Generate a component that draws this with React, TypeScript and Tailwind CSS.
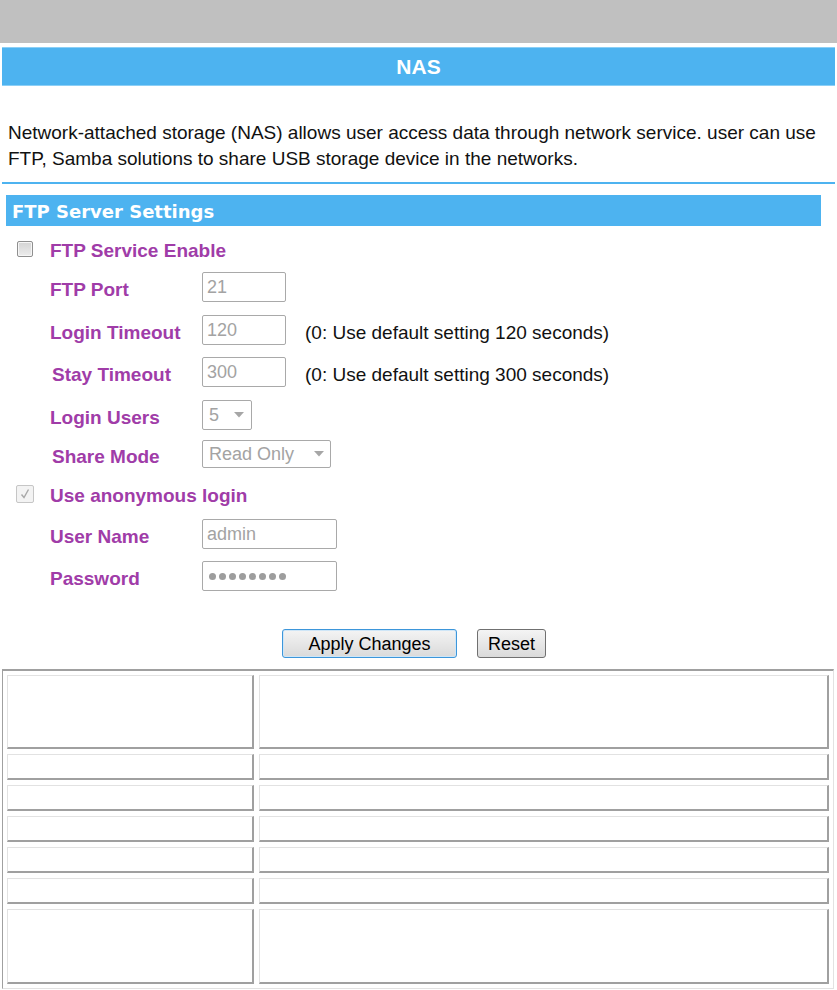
import React from "react";

const labelCls =
  "font-bold text-[19px] leading-none text-[#a03ca8] whitespace-nowrap pt-[4px]";

function TextBox({ value, w }: { value: string; w: string }) {
  return (
    <div
      className={`${w} h-[30px] border border-[#a9a9a9] rounded-[2px] bg-white flex items-center pl-[4px] text-[18px] text-[#a3a3a3]`}
    >
      {value}
    </div>
  );
}

function Arrow() {
  return (
    <svg width="10" height="6" viewBox="0 0 10 6" className="shrink-0">
      <path d="M0 0 L10 0 L5 5.5 Z" fill="#a6a6a6" />
    </svg>
  );
}

function Row({
  mt,
  label,
  shift,
  children,
}: {
  mt: string;
  label: string;
  shift?: boolean;
  children: React.ReactNode;
}) {
  return (
    <div className={`flex items-center h-[30px] pl-[50px] ${mt}`}>
      <div className={`w-[152px] flex ${shift ? "pl-[2px]" : ""}`}>
        <span className={labelCls}>{label}</span>
      </div>
      {children}
    </div>
  );
}

function Cell({ h }: { h: string }) {
  return (
    <div
      className={`${h} bg-white border-t border-l border-b-2 border-r-2 border-t-[#e2e2e2] border-l-[#e2e2e2] border-b-[#a0a0a0] border-r-[#a0a0a0]`}
    />
  );
}

const noteCls =
  "ml-[19px] pt-[4px] text-[19px] leading-none text-[#111] whitespace-nowrap";

export default function App() {
  return (
    <div className="w-[837px] h-[990px] overflow-hidden bg-white font-['Liberation_Sans',Arial,sans-serif] text-black">
      <div className="h-[43px] bg-[#c0c0c0]" />
      <div className="mt-[4px] mx-[2px] h-[39px] bg-[#4db3f0] border-y border-[#8ccff6] flex items-center justify-center text-white font-bold text-[21px] leading-none">
        NAS
      </div>
      <p className="mt-[34px] pl-[8px] text-[19px] leading-[26px] whitespace-nowrap text-[#111]">
        Network-attached storage (NAS) allows user access data through network
        service. user can use
        <br />
        FTP, Samba solutions to share USB storage device in the networks.
      </p>
      <div className="mt-[10px] mx-[2px] h-[2px] bg-[#4db3f0]" />
      <div className="mt-[11px] ml-[6px] w-[815px] h-[31px] bg-[#4db3f0] flex items-center pl-[6px] pt-[2px] font-['DejaVu_Sans',sans-serif] font-bold text-[18px] leading-none text-white">
        FTP Server Settings
      </div>

      {/* FTP Service Enable */}
      <div className="flex items-center h-[30px] mt-[7px] pl-[17px]">
        <div className="mt-[2px] w-[16px] h-[16px] border border-[#8f8f8f] rounded-[2px] bg-linear-to-b from-[#d4d4d4] to-[#ececec] shadow-[inset_0_0_0_1px_#f6f6f6]" />
        <span className={`${labelCls} ml-[17px]`}>FTP Service Enable</span>
      </div>

      <Row mt="mt-[9px]" label="FTP Port">
        <TextBox value="21" w="w-[84px]" />
      </Row>
      <Row mt="mt-[13px]" label="Login Timeout">
        <TextBox value="120" w="w-[84px]" />
        <span className={noteCls}>(0: Use default setting 120 seconds)</span>
      </Row>
      <Row mt="mt-[12px]" label="Stay Timeout" shift>
        <TextBox value="300" w="w-[84px]" />
        <span className={noteCls}>(0: Use default setting 300 seconds)</span>
      </Row>
      <Row mt="mt-[13px]" label="Login Users">
        <div className="w-[50px] h-[30px] border border-[#a9a9a9] rounded-[2px] bg-white flex items-center pl-[6px] pr-[7px] justify-between text-[18px] text-[#a3a3a3]">
          <span>5</span>
          <Arrow />
        </div>
      </Row>
      <Row mt="mt-[9px]" label="Share Mode" shift>
        <div className="w-[129px] h-[28px] border border-[#a9a9a9] rounded-[2px] bg-white flex items-center pl-[6px] pr-[6px] justify-between text-[18px] text-[#a3a3a3]">
          <span>Read Only</span>
          <Arrow />
        </div>
      </Row>

      {/* Use anonymous login */}
      <div className="flex items-center h-[30px] mt-[9px] pl-[16px]">
        <div className="mt-[2px] w-[18px] h-[18px] border border-[#c6c6c6] rounded-[2px] bg-[#f3f3f3] flex items-center justify-center">
          <svg width="12" height="12" viewBox="0 0 12 12">
            <path
              d="M2.5 6.5 L5 9.5 L9.5 1.5"
              fill="none"
              stroke="#a8a8a8"
              strokeWidth="1.4"
            />
          </svg>
        </div>
        <span className={`${labelCls} ml-[16px]`}>Use anonymous login</span>
      </div>

      <Row mt="mt-[11px]" label="User Name">
        <TextBox value="admin" w="w-[135px]" />
      </Row>
      <Row mt="mt-[12px]" label="Password">
        <div className="w-[135px] h-[30px] border border-[#a9a9a9] rounded-[2px] bg-white flex items-center pl-[6px] gap-[3px]">
          {Array.from({ length: 8 }).map((_, i) => (
            <div key={i} className="w-[7px] h-[7px] rounded-full bg-[#9d9d9d]" />
          ))}
        </div>
      </Row>

      {/* Buttons */}
      <div className="flex mt-[38px]">
        <button className="ml-[282px] w-[175px] h-[29px] border border-[#3d96da] rounded-[3px] bg-linear-to-b from-[#f4f4f4] to-[#dadada] text-[18px] leading-none text-black shadow-[inset_0_0_0_1px_#cfe6f7]">
          Apply Changes
        </button>
        <button className="ml-[20px] w-[69px] h-[29px] border border-[#707070] rounded-[3px] bg-linear-to-b from-[#f4f4f4] to-[#dadada] text-[18px] leading-none text-black">
          Reset
        </button>
      </div>

      {/* Table */}
      <div className="mt-[11px] ml-[2px] w-[832px] border border-t-2 border-t-[#a0a0a0] border-l-[#a0a0a0] border-b-[#e2e2e2] border-r-[#e2e2e2] p-[4px] grid grid-cols-[247px_570px] gap-[5px]">
        <Cell h="h-[74px]" />
        <Cell h="h-[74px]" />
        <Cell h="h-[26px]" />
        <Cell h="h-[26px]" />
        <Cell h="h-[26px]" />
        <Cell h="h-[26px]" />
        <Cell h="h-[26px]" />
        <Cell h="h-[26px]" />
        <Cell h="h-[26px]" />
        <Cell h="h-[26px]" />
        <Cell h="h-[26px]" />
        <Cell h="h-[26px]" />
        <Cell h="h-[75px]" />
        <Cell h="h-[75px]" />
      </div>
    </div>
  );
}
